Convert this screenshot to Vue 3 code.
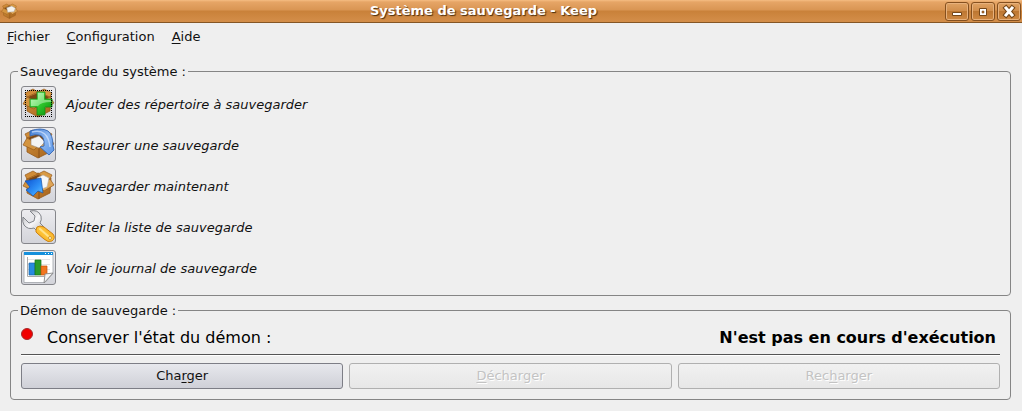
<script setup>
const menus = [
  { key: 'F', rest: 'ichier' },
  { key: 'C', rest: 'onfiguration' },
  { key: 'A', rest: 'ide' },
]
const actions = [
  { icon: 'add', label: 'Ajouter des répertoire à sauvegarder' },
  { icon: 'restore', label: 'Restaurer une sauvegarde' },
  { icon: 'backup', label: 'Sauvegarder maintenant' },
  { icon: 'edit', label: 'Editer la liste de sauvegarde' },
  { icon: 'log', label: 'Voir le journal de sauvegarde' },
]
const daemonButtons = [
  { before: 'Cha', key: 'r', after: 'ger', disabled: false },
  { before: '', key: 'D', after: 'écharger', disabled: true },
  { before: 'Rec', key: 'h', after: 'arger', disabled: true },
]
</script>

<template>
  <div class="window">
    <svg class="defs" width="0" height="0" aria-hidden="true">
      <defs>
        <linearGradient id="card" x1="0" y1="0" x2="1" y2="1">
          <stop offset="0" stop-color="#cf8f3c" /><stop offset="1" stop-color="#a8641c" />
        </linearGradient>
        <linearGradient id="green" x1="0" y1="0" x2="1" y2="1">
          <stop offset="0" stop-color="#b8ffae" /><stop offset=".45" stop-color="#35d032" /><stop offset="1" stop-color="#078a08" />
        </linearGradient>
        <linearGradient id="arrow" x1="0" y1="0" x2="1" y2="1">
          <stop offset="0" stop-color="#3f79d0" /><stop offset=".5" stop-color="#8db8f2" /><stop offset="1" stop-color="#5a94e4" />
        </linearGradient>
        <linearGradient id="folder" x1="0" y1="0" x2="1" y2="1">
          <stop offset="0" stop-color="#0a4fd0" /><stop offset=".6" stop-color="#2f92f8" /><stop offset="1" stop-color="#6cc4ff" />
        </linearGradient>
        <linearGradient id="handle" x1="0" y1="1" x2="1" y2="0">
          <stop offset="0" stop-color="#f09a10" /><stop offset=".5" stop-color="#ffc83c" /><stop offset="1" stop-color="#ef9710" />
        </linearGradient>
        <linearGradient id="steel" x1="0" y1="0" x2="1" y2="1">
          <stop offset="0" stop-color="#b4b6ba" /><stop offset=".5" stop-color="#f6f6f8" /><stop offset="1" stop-color="#b4b6ba" />
        </linearGradient>
        <symbol id="box" viewBox="0 0 33 33">
          <path d="M5 9 16 4 29 9 28 24 16 30 5 24Z" fill="url(#card)" stroke="#94591b" stroke-width=".8" />
          <path d="M6 10 16 6 27 10 17 17Z" fill="#7d4715" />
          <path d="M5 10 3 6 11 2 16 5Z" fill="#d08c38" stroke="#94591b" stroke-width=".7" />
          <path d="M16 5 22 2 30 6 28 10Z" fill="#d99a44" stroke="#94591b" stroke-width=".7" />
          <path d="M5 10 1 17 12 22 17 17Z" fill="#d39440" stroke="#94591b" stroke-width=".7" />
          <path d="M28 10 32 16 22 22 17 17Z" fill="#dfa556" stroke="#94591b" stroke-width=".7" />
          <path d="M17 20V30" stroke="#895018" />
        </symbol>
      </defs>
    </svg>

    <header class="titlebar">
      <svg class="app-icon" viewBox="0 0 33 33" aria-hidden="true">
        <use href="#box" />
        <path d="M11 9 21 6 28 10 25 17 13 18Z" fill="#f5f3ef" stroke="#aaa39a" />
      </svg>
      <h1>Système de sauvegarde - Keep</h1>
      <div class="controls">
        <button type="button" aria-label="Réduire">
          <svg viewBox="0 0 22 17"><path d="M6.5 9.5h9v3h-9z" fill="#fff" stroke="#754719" /></svg>
        </button>
        <button type="button" aria-label="Agrandir">
          <svg viewBox="0 0 22 17">
            <path d="M7.5 5.5h7v7h-7z" fill="#fff" stroke="#754719" />
            <path d="M10 8h2v2h-2z" fill="#b87636" stroke="#754719" stroke-width=".5" />
          </svg>
        </button>
        <button type="button" aria-label="Fermer">
          <svg viewBox="0 0 22 17">
            <path d="m8 5 6 7m0-7-6 7" stroke="#754719" stroke-width="5" stroke-linecap="square" />
            <path d="m8 5 6 7m0-7-6 7" stroke="#fff" stroke-width="3" stroke-linecap="square" />
          </svg>
        </button>
      </div>
    </header>

    <nav class="menubar">
      <button v-for="m in menus" :key="m.key" type="button"><u>{{ m.key }}</u>{{ m.rest }}</button>
    </nav>

    <main>
      <fieldset>
        <legend>Sauvegarde du système :</legend>
        <div class="actions">
          <div v-for="a in actions" :key="a.icon" class="action">
            <button :id="a.icon" type="button" class="tool" :aria-labelledby="a.icon + '-label'">
              <svg v-if="a.icon === 'add'" viewBox="0 0 33 33">
                <use href="#box" />
                <path d="M15 5h8v7h7v8h-7v8h-8v-8H8v-8h7z" fill="url(#green)" stroke="#168e17" stroke-width=".8" />
                <path d="M16 6h6v7h7v2q-10 0-13 4H9v-6h7z" fill="#e7ffe4" opacity=".45" />
                <g fill="none" stroke="#000" stroke-dasharray="1 1" shape-rendering="crispEdges">
                  <path d="M3 3.5h27M3 29.5h27M3.5 3v27M29.5 3v27" />
                </g>
              </svg>
              <svg v-else-if="a.icon === 'restore'" viewBox="0 0 33 33">
                <use href="#box" />
                <path d="m9 11 8-3 6 6-6 6-8-3z" fill="#f4f4f4" stroke="#9c8c78" stroke-width=".6" />
                <path d="M8 3Q19-1 26 3Q31 7 31 18L32 22 27 27 18 19 22 18Q23 8 17 7Q13 6 8 8Z" fill="url(#arrow)" stroke="#3267b5" stroke-width=".9" />
                <path d="M10 4Q26 0 28 19" fill="none" stroke="#d4e6ff" stroke-width="1.500" opacity=".7" />
              </svg>
              <svg v-else-if="a.icon === 'backup'" viewBox="0 0 33 33">
                <use href="#box" />
                <path d="m15 9 6-3 6 3-2 9-8 3z" fill="#f7f7f7" stroke="#b8b2aa" stroke-width=".6" />
                <path d="M3 12 19 9 21 24 16 22 11 27 4 21 8 18Z" fill="url(#folder)" stroke="#1853a8" stroke-width=".7" />
              </svg>
              <svg v-else-if="a.icon === 'edit'" viewBox="0 0 33 33">
                <path d="M8 1Q16-1 19 6Q20 10 18 13L23 18 17 23 12 18Q6 20 2 15Q0 12 1 7L7 13 12 11 13 6Z" fill="url(#steel)" stroke="#777a80" stroke-width=".9" />
                <path d="M14 20Q14 16 18 16L22 17 31 24Q34 28 30 31Q26 33 22 29L16 24Q13 22 14 20Z" fill="url(#handle)" stroke="#c77b0b" stroke-width=".9" />
                <path d="m18 19 8 7" stroke="#ffe28b" stroke-width="2" stroke-linecap="round" />
                <circle cx="28" cy="28" r="1.500" fill="#fff5cf" stroke="#b8750c" stroke-width=".6" />
              </svg>
              <svg v-else viewBox="0 0 33 33">
                <path d="M2 1.500h29v21l-8 9H2z" fill="#fff" stroke="#9fa3a8" stroke-width=".8" />
                <path d="M2 1h29v3H2z" fill="#1590dc" />
                <path d="M23 2.500h1m2 0h1m2 0h1" stroke="#fff" />
                <path d="M5 8.500h23M5 13.500h23M5 18.500h23" stroke="#e4e4e4" />
                <path d="M7 12h6v12H7z" fill="#278be0" stroke="#1764ac" stroke-width=".7" />
                <path d="M13 9h6v15h-6z" fill="#2a9c2c" stroke="#187519" stroke-width=".7" />
                <path d="M19 15h6v9h-6z" fill="#f27620" stroke="#c75008" stroke-width=".7" />
                <path d="M5.500 6v19.500h17" fill="none" stroke="#aaa" />
                <path d="m22 32 1-9 8-1z" fill="#f5f5f5" stroke="#888" stroke-width=".9" />
              </svg>
            </button>
            <label :id="a.icon + '-label'" :for="a.icon">{{ a.label }}</label>
          </div>
        </div>
      </fieldset>

      <fieldset>
        <legend>Démon de sauvegarde :</legend>
        <div class="status">
          <span class="dot"></span>
          <span class="status-name">Conserver l'état du démon :</span>
          <strong>N'est pas en cours d'exécution</strong>
        </div>
        <div class="daemon-buttons">
          <button v-for="b in daemonButtons" :key="b.key" type="button" :disabled="b.disabled">{{ b.before }}<u>{{ b.key }}</u>{{ b.after }}</button>
        </div>
      </fieldset>
    </main>
  </div>
</template>

<style>
body {
  background: #efefef;
}
</style>

<style scoped>
.window {
  font: 13px/15px "DejaVu Sans", sans-serif;
  color: #111;
  background: #efefef;
}
.defs {
  position: absolute;
}
button {
  box-sizing: border-box;
  margin: 0;
  padding: 0;
  font: inherit;
  color: inherit;
}
u {
  text-decoration-thickness: 1px;
  text-underline-offset: 2px;
}
.titlebar {
  box-sizing: border-box;
  display: flex;
  align-items: center;
  height: 23px;
  padding: 0 1px;
  background: linear-gradient(#f5bd83 0, #e6a566 2px, #d99553 10px, #c98139 11px, #d38d48 21px);
  border-bottom: 1px solid #855625;
}
.app-icon {
  width: 17px;
  height: 17px;
}
h1 {
  flex: 1;
  margin: 0;
  padding-left: 4px;
  font-size: 13px;
  line-height: 20px;
  text-align: center;
  color: #fff;
  text-shadow: 1px 1px 1px #4b2d0e;
}
.controls {
  display: flex;
  gap: 2px;
}
.controls button {
  width: 24px;
  height: 19px;
  border: 1px solid #85501f;
  border-radius: 3px;
  background: linear-gradient(#dfa264, #cf8c49 50%, #bd7732 50%, #cf8943);
  box-shadow: inset 0 0 0 1px #e7b17c;
}
svg {
  display: block;
}
.controls svg {
  width: 22px;
  height: 17px;
}
.menubar {
  display: flex;
  gap: 17px;
  padding: 6px 7px 0;
}
.menubar button {
  border: 0;
  background: none;
  line-height: 16px;
}
main {
  display: grid;
  gap: 7px;
  padding: 19px 11px 11px 10px;
}
fieldset {
  min-width: 0;
  margin: 0;
  padding: 0 10px 10px;
  border: 1px solid #858585;
  border-radius: 4px;
}
legend {
  margin-left: -3px;
  padding: 0 2px;
}
.actions {
  display: grid;
  gap: 6px;
  padding-top: 7px;
}
.action {
  display: flex;
  align-items: center;
  gap: 10px;
  font-style: italic;
}
.action label {
  padding-top: 2px;
}
.tool {
  width: 35px;
  height: 35px;
  border: 1px solid #85868b;
  border-radius: 3px;
  background: linear-gradient(#ececef, #d3d4da);
}
.tool svg {
  width: 33px;
  height: 33px;
}
.status {
  display: flex;
  align-items: center;
  padding: 6px 4px 2px 0;
  border-bottom: 1px solid #555;
  box-shadow: 0 1px #fff;
  font-size: 16px;
  line-height: 28px;
  color: #000;
}
.dot {
  box-sizing: border-box;
  width: 12px;
  height: 12px;
  margin: 0 14px 8px 0;
  border: 1px solid #a62c2c;
  border-radius: 50%;
  background: #f00000;
}
.status-name {
  flex: 1;
}
.daemon-buttons {
  display: grid;
  grid-template-columns: repeat(3, 1fr);
  gap: 6px;
  padding-top: 8px;
}
.daemon-buttons button {
  height: 26px;
  padding-bottom: 2px;
  border: 1px solid #7d7e86;
  border-radius: 3px;
  background: linear-gradient(#e7e8ed, #cfd0d7);
}
.daemon-buttons button:disabled {
  color: #c3c3c3;
  border-color: #b0b0b0;
  background: linear-gradient(#f1f1f1, #e7e7e7);
  text-shadow: 1px 1px #fff;
}
</style>
